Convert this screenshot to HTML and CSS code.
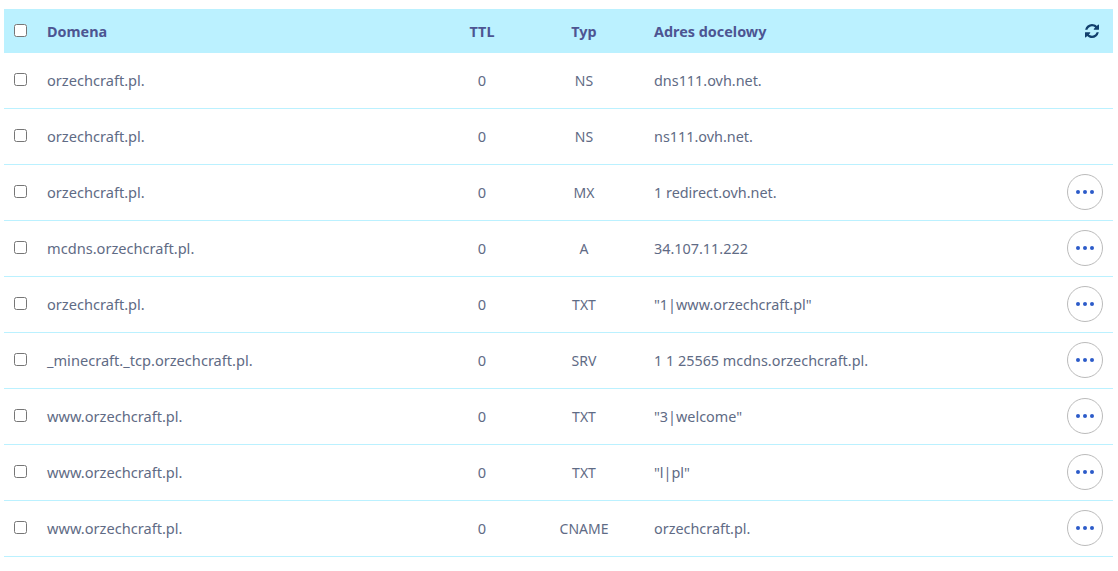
FILE: index.html
```html
<!DOCTYPE html>
<html lang="pl">
<head>
<meta charset="utf-8">
<title>Strefa DNS</title>
<link rel="stylesheet" href="styles.css">
</head>
<body>
<table class="dns">
<colgroup><col class="c-check"><col class="c-domain"><col class="c-ttl"><col class="c-type"><col class="c-target"><col class="c-action"></colgroup>
<thead>
<tr>
<th class="check"><input type="checkbox" class="box"></th>
<th>Domena</th>
<th class="mid">TTL</th>
<th class="mid">Typ</th>
<th>Adres docelowy</th>
<th class="action"><svg class="refresh" viewBox="0 0 1536 1536" width="14" height="14"><path fill="#113f6d" d="M1511 928q0 5-1 7-64 268-268 434.500T764 1536q-146 0-282.500-55T238 1324l-129 129q-19 19-45 19t-45-19-19-45V960q0-26 19-45t45-19h448q26 0 45 19t19 45-19 45l-137 137q71 66 161 102t187 36q134 0 250-65t186-179q11-17 53-117 8-23 30-23h192q13 0 22.500 9.500t9.500 22.500zm25-800v448q0 26-19 45t-45 19h-448q-26 0-45-19t-19-45 19-45l138-138Q969 256 768 256q-134 0-250 65T332 500q-11 17-53 117-8 23-30 23H50q-13 0-22.500-9.500T18 608v-7q65-268 270-434.500T768 0q146 0 284 55.500T1297 212l130-129q19-19 45-19t45 19 19 45z"/></svg></th>
</tr>
</thead>
<tbody>
<tr><td class="check"><input type="checkbox" class="box"></td><td>orzechcraft.pl.</td><td class="mid">0</td><td class="mid type">NS</td><td class="target">dns111.ovh.net.</td><td class="action"></td></tr>
<tr><td class="check"><input type="checkbox" class="box"></td><td>orzechcraft.pl.</td><td class="mid">0</td><td class="mid type">NS</td><td class="target">ns111.ovh.net.</td><td class="action"></td></tr>
<tr><td class="check"><input type="checkbox" class="box"></td><td>orzechcraft.pl.</td><td class="mid">0</td><td class="mid type">MX</td><td class="target">1 redirect.ovh.net.</td><td class="action"><button class="more"><i></i><i></i><i></i></button></td></tr>
<tr><td class="check"><input type="checkbox" class="box"></td><td>mcdns.orzechcraft.pl.</td><td class="mid">0</td><td class="mid type">A</td><td class="target">34.107.11.222</td><td class="action"><button class="more"><i></i><i></i><i></i></button></td></tr>
<tr><td class="check"><input type="checkbox" class="box"></td><td>orzechcraft.pl.</td><td class="mid">0</td><td class="mid type">TXT</td><td class="target">"1|www.orzechcraft.pl"</td><td class="action"><button class="more"><i></i><i></i><i></i></button></td></tr>
<tr><td class="check"><input type="checkbox" class="box"></td><td>_minecraft._tcp.orzechcraft.pl.</td><td class="mid">0</td><td class="mid type">SRV</td><td class="target">1 1 25565 mcdns.orzechcraft.pl.</td><td class="action"><button class="more"><i></i><i></i><i></i></button></td></tr>
<tr><td class="check"><input type="checkbox" class="box"></td><td>www.orzechcraft.pl.</td><td class="mid">0</td><td class="mid type">TXT</td><td class="target">"3|welcome"</td><td class="action"><button class="more"><i></i><i></i><i></i></button></td></tr>
<tr><td class="check"><input type="checkbox" class="box"></td><td>www.orzechcraft.pl.</td><td class="mid">0</td><td class="mid type">TXT</td><td class="target">"l|pl"</td><td class="action"><button class="more"><i></i><i></i><i></i></button></td></tr>
<tr><td class="check"><input type="checkbox" class="box"></td><td>www.orzechcraft.pl.</td><td class="mid">0</td><td class="mid type">CNAME</td><td class="target">orzechcraft.pl.</td><td class="action"><button class="more"><i></i><i></i><i></i></button></td></tr>
</tbody>
</table>
</body>
</html>
```
FILE: styles.css
```css
html, body { margin: 0; background: #fff; }
body { padding: 9px 5px 0 4px; font-family: "Noto Sans", sans-serif; font-size: 14.6px; color: #5f6b85; overflow: hidden; }
.dns { width: 1109px; table-layout: fixed; border-collapse: collapse; }
.c-check { width: 43px; }
.c-domain { width: 383px; }
.c-ttl { width: 104px; }
.c-type { width: 100px; }
.c-target { width: auto; }
.c-action { width: 50px; }
th { height: 44px; padding: 0; background: #bbf1ff; color: #4d5592; font-size: 14.4px; font-weight: 700; text-align: left; }
td { height: 55px; padding: 0; border-bottom: 1px solid #bbf1ff; line-height: 19px; }
.mid { text-align: center; }
.type { font-size: 14px; }
.target { font-size: 14.4px; }
td:nth-child(5), th:nth-child(5) { padding-left: 20px; }
.check { padding-left: 10px; }
.box { display: block; width: 13px; height: 13px; margin: 0 0 2px; }
th .box { margin: 0 0 1px; }
.action { text-align: right; padding-right: 10px; }
.refresh { display: block; margin-left: auto; margin-right: 4px; }
.more { display: flex; align-items: center; justify-content: center; gap: 3px; width: 36px; height: 36px; padding: 0; margin: 0 0 1px auto; background: #fff; border: 1px solid #bbb; border-radius: 50%; }
.more i { display: block; width: 4px; height: 4px; border-radius: 50%; background: #2c5bc9; }
```
